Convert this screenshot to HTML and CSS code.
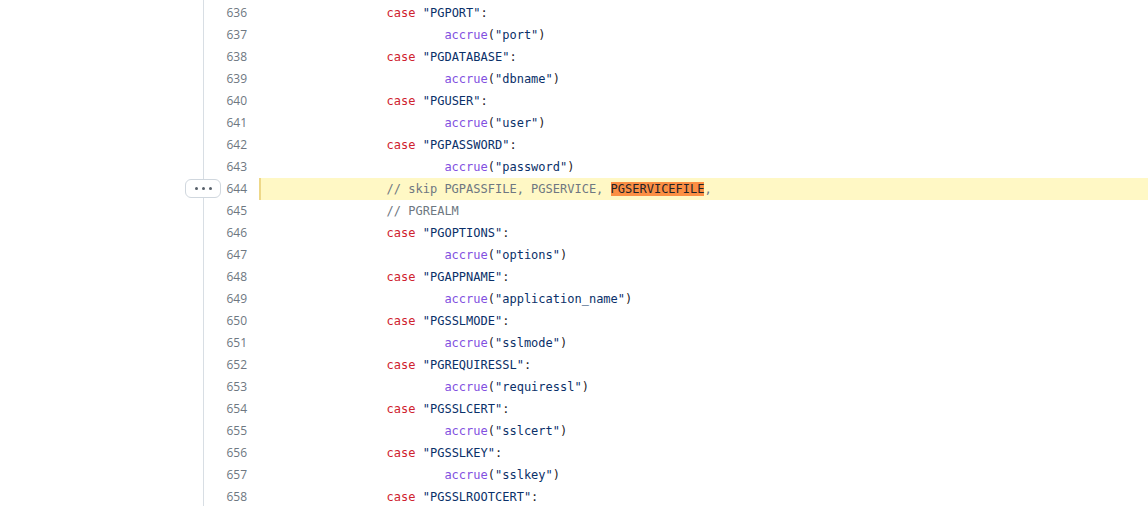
FILE: index.html
```html
<!DOCTYPE html>
<html>
<head>
<meta charset="utf-8">
<link rel="stylesheet" href="styles.css">
</head>
<body>
<div class="view">
  <div class="code">
    <div class="row"><span class="ln">636</span><span class="src">		<span class="k">case</span> <span class="s">"PGPORT"</span>:</span></div>
    <div class="row"><span class="ln">637</span><span class="src">			<span class="f">accrue</span>(<span class="s">"port"</span>)</span></div>
    <div class="row"><span class="ln">638</span><span class="src">		<span class="k">case</span> <span class="s">"PGDATABASE"</span>:</span></div>
    <div class="row"><span class="ln">639</span><span class="src">			<span class="f">accrue</span>(<span class="s">"dbname"</span>)</span></div>
    <div class="row"><span class="ln">640</span><span class="src">		<span class="k">case</span> <span class="s">"PGUSER"</span>:</span></div>
    <div class="row"><span class="ln">641</span><span class="src">			<span class="f">accrue</span>(<span class="s">"user"</span>)</span></div>
    <div class="row"><span class="ln">642</span><span class="src">		<span class="k">case</span> <span class="s">"PGPASSWORD"</span>:</span></div>
    <div class="row"><span class="ln">643</span><span class="src">			<span class="f">accrue</span>(<span class="s">"password"</span>)</span></div>
    <div class="row hl"><span class="ln">644</span><span class="src">		<span class="c">// skip PGPASSFILE, PGSERVICE, <mark class="match">PGSERVICEFILE</mark>,</span></span>
      <button class="more"><span></span><span></span><span></span></button></div>
    <div class="row"><span class="ln">645</span><span class="src">		<span class="c">// PGREALM</span></span></div>
    <div class="row"><span class="ln">646</span><span class="src">		<span class="k">case</span> <span class="s">"PGOPTIONS"</span>:</span></div>
    <div class="row"><span class="ln">647</span><span class="src">			<span class="f">accrue</span>(<span class="s">"options"</span>)</span></div>
    <div class="row"><span class="ln">648</span><span class="src">		<span class="k">case</span> <span class="s">"PGAPPNAME"</span>:</span></div>
    <div class="row"><span class="ln">649</span><span class="src">			<span class="f">accrue</span>(<span class="s">"application_name"</span>)</span></div>
    <div class="row"><span class="ln">650</span><span class="src">		<span class="k">case</span> <span class="s">"PGSSLMODE"</span>:</span></div>
    <div class="row"><span class="ln">651</span><span class="src">			<span class="f">accrue</span>(<span class="s">"sslmode"</span>)</span></div>
    <div class="row"><span class="ln">652</span><span class="src">		<span class="k">case</span> <span class="s">"PGREQUIRESSL"</span>:</span></div>
    <div class="row"><span class="ln">653</span><span class="src">			<span class="f">accrue</span>(<span class="s">"requiressl"</span>)</span></div>
    <div class="row"><span class="ln">654</span><span class="src">		<span class="k">case</span> <span class="s">"PGSSLCERT"</span>:</span></div>
    <div class="row"><span class="ln">655</span><span class="src">			<span class="f">accrue</span>(<span class="s">"sslcert"</span>)</span></div>
    <div class="row"><span class="ln">656</span><span class="src">		<span class="k">case</span> <span class="s">"PGSSLKEY"</span>:</span></div>
    <div class="row"><span class="ln">657</span><span class="src">			<span class="f">accrue</span>(<span class="s">"sslkey"</span>)</span></div>
    <div class="row"><span class="ln">658</span><span class="src">		<span class="k">case</span> <span class="s">"PGSSLROOTCERT"</span>:</span></div>
  </div>
</div>
</body>
</html>
```
FILE: styles.css
```css
html, body {
  margin: 0;
  padding: 0;
  background: #ffffff;
  overflow: hidden;
}
.view {
  margin-left: 203px;
  border-left: 1px solid #d8dee4;
  height: 506px;
  padding-top: 2px;
  box-sizing: border-box;
}
.code {
  display: flex;
  flex-direction: column;
}
.row {
  position: relative;
  display: flex;
  height: 22px;
  line-height: 22px;
}
.ln {
  width: 43px;
  padding-right: 12px;
  text-align: right;
  font-family: "Open Sans", "Noto Sans", sans-serif;
  font-size: 12px;
  color: #6e7781;
  flex: none;
}
.src {
  flex: 1;
  border-left: 2px solid transparent;
  padding-left: 10px;
  font-family: "DejaVu Sans Mono", "Liberation Mono", monospace;
  font-size: 12px;
  white-space: pre;
  tab-size: 8;
  color: #1f2328;
}
.hl .src {
  background: #fff8c5;
  border-left-color: #eed888;
}
.k { color: #cf222e; }
.s { color: #0a3069; }
.f { color: #8250df; }
.c { color: #6e7781; }
.match {
  background: #fb8f44;
  color: #1f2328;
  padding: 0;
}
.more {
  position: absolute;
  left: -19px;
  top: 1px;
  width: 36px;
  height: 19px;
  box-sizing: border-box;
  border: 1px solid #d0d7de;
  border-radius: 6px;
  background: #ffffff;
  display: flex;
  align-items: center;
  justify-content: center;
  gap: 4px;
  padding: 0;
}
.more span {
  width: 3px;
  height: 3px;
  border-radius: 50%;
  background: #57606a;
}
```
